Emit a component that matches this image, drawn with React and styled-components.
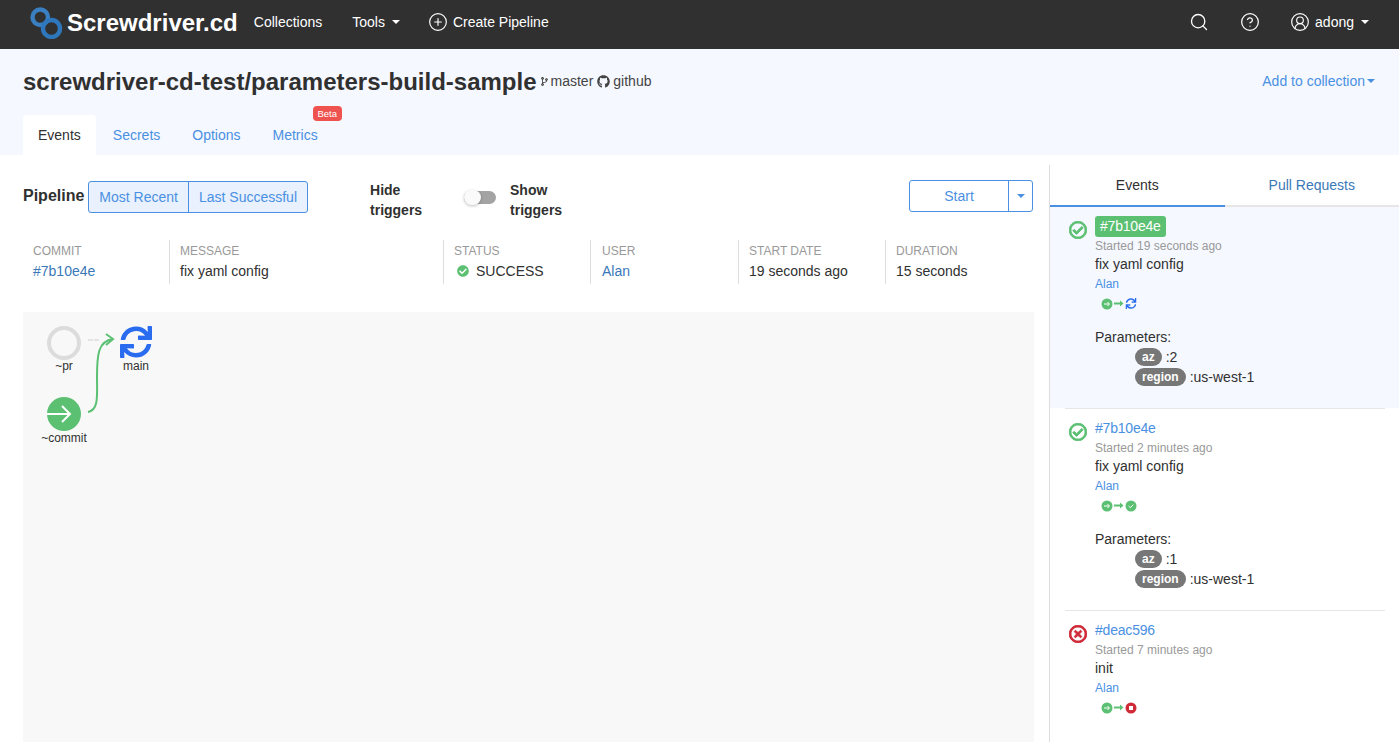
import React from 'react';
import styled, { createGlobalStyle } from 'styled-components';
import { FaCodeBranch, FaGithub, FaSync, FaRegCheckCircle, FaRegTimesCircle, FaCheckCircle } from 'react-icons/fa';
import { Search, CircleHelp, CircleUserRound, CirclePlus } from 'lucide-react';

const GREEN = '#5cc073';
const BLUE = '#4a90e2';

const GlobalStyle = createGlobalStyle`
    html, body {
        margin: 0;
        height: 742px;
        overflow: hidden;
        background: #fff;
        font-family: "Liberation Sans", Arial, sans-serif;
        font-size: 14px;
        color: #303030;
    }
`;

// top navigation bar
const Nav = styled.nav`
    height: 49px;
    background: #303030;
    color: #fff;
    display: flex;
    align-items: center;
    padding: 0 30px 6px 30px;
    box-sizing: border-box;
`;
const Brand = styled.div`
    display: flex;
    align-items: center;
    gap: 4px;
    font-size: 24px;
    font-weight: 700;
    margin: 2px 16px 0 0;
`;
const NavItem = styled.div`
    display: flex;
    align-items: center;
    gap: ${p => p.$inner ?? 5}px;
    margin-right: ${p => p.$gap || 0}px;
    white-space: nowrap;
`;
const Spacer = styled.div`
    flex: 1;
`;
const Caret = styled.span`
    display: inline-block;
    width: 0;
    height: 0;
    margin-left: ${p => p.$left ?? 2}px;
    border-left: 4px solid transparent;
    border-right: 4px solid transparent;
    border-top: 4px solid ${p => p.$color || '#fff'};
`;

// header with the pipeline name and tabs
const Header = styled.header`
    height: 106px;
    background: #f5f8ff;
    padding: 0 23px;
    box-sizing: border-box;
    display: flex;
    flex-direction: column;
`;
const TitleRow = styled.div`
    display: flex;
    align-items: center;
    height: 66px;
`;
const Title = styled.h1`
    margin: 0 3px 0 0;
    font-size: 24px;
    font-weight: 700;
    color: #303030;
    white-space: nowrap;
`;
const Source = styled.span`
    display: flex;
    align-items: center;
    gap: ${p => p.$inner}px;
    margin: -2px 4px 0 0;
    color: #444;
`;
const AddLink = styled.a`
    margin: -2px 1px 0 auto;
    color: ${BLUE};
    display: flex;
    align-items: center;
`;
const Tabs = styled.div`
    display: flex;
`;
const Tab = styled.div`
    position: relative;
    height: 40px;
    line-height: 40px;
    padding: 0 ${p => (p.$active ? 15 : 16)}px;
    border-radius: 4px 4px 0 0;
    background: ${p => (p.$active ? '#fff' : 'transparent')};
    color: ${p => (p.$active ? '#303030' : BLUE)};
    margin-right: ${p => (p.$active ? 1 : 0)}px;
`;
const Beta = styled.span`
    position: absolute;
    top: -9px;
    right: -8px;
    width: 29px;
    height: 15px;
    border-radius: 4px;
    background: #ee5350;
    color: #fff;
    font-size: 9.5px;
    line-height: 15px;
    text-align: center;
`;

// two column page body
const Body = styled.div`
    display: flex;
    height: 587px;
    overflow: hidden;
`;
const Main = styled.main`
    width: 1011px;
    margin: 0 15px 0 23px;
    padding-top: 25px;
    display: flex;
    flex-direction: column;
`;
const Toolbar = styled.div`
    display: flex;
    align-items: center;
    height: 34px;
`;
const PipelineLabel = styled.b`
    font-size: 16px;
    margin: -2px 4px 0 0;
`;
const Group = styled.div`
    display: flex;
    height: 32px;
    box-sizing: border-box;
    border: 1px solid ${BLUE};
    border-radius: 3px;
    background: #e8f1fd;
    color: ${BLUE};
`;
const GroupBtn = styled.div`
    padding: 0 10px;
    line-height: 31px;
    & + & {
        border-left: 1px solid ${BLUE};
    }
`;
const TriggerLabel = styled.b`
    width: 70px;
    line-height: 20px;
    margin: 5px ${p => p.$right || 0}px 0 ${p => p.$left || 0}px;
`;
const Toggle = styled.div`
    position: relative;
    width: 32px;
    height: 13px;
    margin: 1px 14px 0 0;
    border-radius: 7px;
    background: #a3a3a3;
`;
const Knob = styled.span`
    position: absolute;
    left: 0;
    top: -1px;
    width: 17px;
    height: 15px;
    border-radius: 8px;
    background: #fafafa;
    box-shadow: 0 1px 3px rgba(0, 0, 0, 0.25);
`;
const StartGroup = styled(Group)`
    margin: -2px 1px 0 auto;
    background: #fff;
`;
const StartBtn = styled.div`
    width: 98px;
    text-align: center;
    line-height: 30px;
`;
const StartCaret = styled.div`
    width: 23px;
    border-left: 1px solid ${BLUE};
    display: flex;
    align-items: center;
    justify-content: center;
`;

const Meta = styled.div`
    display: grid;
    grid-template-columns: 146px 274px 147px 148px 147px 147px;
    height: 44px;
    margin: 26px 0 28px;
`;
const MetaCell = styled.div`
    padding: 1px 0 0 ${p => p.$pad || 10}px;
    border-left: ${p => (p.$first ? '0' : '1px solid #ddd')};
    line-height: 20px;
`;
const MetaLabel = styled.div`
    font-size: 12px;
    color: #999;
    line-height: 20px;
`;
const MetaValue = styled.div`
    display: flex;
    align-items: center;
    gap: 7px;
    height: 19px;
    color: ${p => p.$color || '#303030'};
`;
const GraphArea = styled.div`
    flex: 1;
    background: #f8f8f8;
`;

// side panel with the events list
const Side = styled.aside`
    flex: 1;
    margin-top: 10px;
    border-left: 1px solid #ddd;
`;
const SideTabs = styled.div`
    display: flex;
    height: 42px;
`;
const SideTab = styled.div`
    flex: 1;
    text-align: center;
    line-height: 40px;
    box-sizing: border-box;
    border-bottom: 2px solid ${p => (p.$active ? BLUE : '#e6e6e6')};
    color: ${p => (p.$active ? '#303030' : '#3b78b8')};
`;
const EventItem = styled.div`
    background: ${p => (p.$highlight ? '#f5f8ff' : '#fff')};
    height: 201px;
    box-sizing: border-box;
    padding: 9px 0 0 19px;
    display: flex;
    gap: 8px;
`;
const Divider = styled.div`
    height: 1px;
    margin: 0 14px 0 15px;
    background: #e6e6e6;
`;
const StatusIcon = styled.div`
    color: ${p => p.$color};
    font-size: 18px;
    line-height: 0;
    padding-top: 5px;
    svg {
        stroke: currentColor;
        stroke-width: 28;
    }
`;
const EventInfo = styled.div`
    display: flex;
    flex-direction: column;
    align-items: flex-start;
`;
const Sha = styled.div`
    height: ${p => (p.$badge ? 21 : 20)}px;
    line-height: ${p => (p.$badge ? 21 : 20)}px;
    padding: 0 ${p => (p.$badge ? 5 : 0)}px;
    border-radius: 3px;
    letter-spacing: -0.2px;
    background: ${p => (p.$badge ? GREEN : 'transparent')};
    color: ${p => (p.$badge ? '#fff' : BLUE)};
`;
const Started = styled.div`
    font-size: 12px;
    color: #999;
    line-height: 18px;
    margin-top: ${p => (p.$badge ? 0 : 1)}px;
`;
const Message = styled.div`
    line-height: 20px;
    margin-top: -1px;
`;
const Author = styled.div`
    font-size: 12px;
    color: ${BLUE};
    line-height: 18px;
    margin-top: 1px;
`;
const MiniWrap = styled.div`
    margin: 3px 0 0 5px;
    height: 16px;
    line-height: 0;
`;
const Params = styled.div`
    margin-top: 15px;
    line-height: 20px;
`;
const ParamRow = styled.div`
    display: flex;
    align-items: center;
    gap: 4px;
    height: 20px;
    margin-left: 40px;
`;
const Pill = styled.span`
    height: 18px;
    line-height: 18px;
    padding: 0 7px;
    border-radius: 9px;
    background: #777;
    color: #fff;
    font-size: 12px;
    font-weight: 700;
`;

// blue interlinked rings of the logo
const Logo = () => (
    <svg width="33" height="32" viewBox="0 0 33 32">
        <rect x="2.5" y="2.5" width="15.5" height="15.5" rx="7.7" fill="none" stroke="#3a7fc1" strokeWidth="4.4" />
        <rect x="13" y="13" width="17" height="17" rx="8.5" fill="none" stroke="#2f77bd" strokeWidth="4.4" />
    </svg>
);

// green start node, arrow and last job status
const MiniGraph = ({ end }) => (
    <svg width="38" height="16" viewBox="0 0 38 16">
        <circle cx="7" cy="8" r="5.5" fill={GREEN} />
        <path d="M4 8h5M7.5 6l2 2-2 2" fill="none" stroke="#fff" strokeWidth="1" />
        <path d="M14 7.5h7" stroke={GREEN} strokeWidth="2" />
        <path d="M20 4.5l3.5 3-3.5 3z" fill={GREEN} />
        {end === 'running' && <FaSync x="25.5" y="2" size={11} color="#2a6cf0" />}
        {end === 'success' && (
            <>
                <circle cx="31" cy="8" r="5.5" fill={GREEN} />
                <path d="M28.6 8l1.7 1.7 3-3" fill="none" stroke="#fff" strokeWidth="1" />
            </>
        )}
        {end === 'failure' && (
            <>
                <circle cx="31" cy="8" r="5.5" fill="#cf2a38" />
                <rect x="29" y="6" width="4" height="4" fill="#fff" />
            </>
        )}
    </svg>
);

// workflow graph, page coordinates shifted by the area's offset
const Workflow = () => (
    <svg width="200" height="150" viewBox="23 312 200 150" fontFamily="Liberation Sans, Arial, sans-serif" fontSize="12" fill="#303030">
        <circle cx="64" cy="343" r="15" fill="none" stroke="#dcdcdc" strokeWidth="4" />
        <text x="64" y="370" textAnchor="middle">~pr</text>
        <path d="M88 340h11" stroke="#dcdcdc" strokeWidth="1.6" strokeDasharray="5 1" />
        <path d="M88 412C99 410 97 395 97 377C97 355 98 341 113 339" fill="none" stroke={GREEN} strokeWidth="2" />
        <path d="M106 334l7 5-7 6" fill="none" stroke={GREEN} strokeWidth="2" />
        <circle cx="64" cy="414" r="17" fill={GREEN} />
        <path d="M47 414h22M62 406l8 8-8 8" fill="none" stroke="#fff" strokeWidth="2" />
        <text x="64" y="442" textAnchor="middle">~commit</text>
        <FaSync x="120" y="326" size={32} color="#2a6cf0" />
        <text x="136" y="370" textAnchor="middle">main</text>
    </svg>
);

const metaCols = [
    { label: 'COMMIT', value: '#7b10e4e', color: '#3b78b8' },
    { label: 'MESSAGE', value: 'fix yaml config' },
    { label: 'STATUS', value: 'SUCCESS', status: true },
    { label: 'USER', value: 'Alan', color: '#3b78b8', pad: 11 },
    { label: 'START DATE', value: '19 seconds ago' },
    { label: 'DURATION', value: '15 seconds' },
];

const events = [
    { sha: '#7b10e4e', started: 'Started 19 seconds ago', message: 'fix yaml config', state: 'success', end: 'running', az: '2', active: true },
    { sha: '#7b10e4e', started: 'Started 2 minutes ago', message: 'fix yaml config', state: 'success', end: 'success', az: '1' },
    { sha: '#deac596', started: 'Started 7 minutes ago', message: 'init', state: 'failure', end: 'failure' },
];

function Event({ sha, started, message, state, end, az, active }) {
    const failed = state === 'failure';
    return (
        <EventItem $highlight={active}>
            <StatusIcon $color={failed ? '#cf2a38' : GREEN}>
                {failed ? <FaRegTimesCircle /> : <FaRegCheckCircle />}
            </StatusIcon>
            <EventInfo>
                <Sha $badge={active}>{sha}</Sha>
                <Started $badge={active}>{started}</Started>
                <Message>{message}</Message>
                <Author>Alan</Author>
                <MiniWrap><MiniGraph end={end} /></MiniWrap>
                {az && (
                    <Params>
                        Parameters:
                        <ParamRow><Pill>az</Pill>:{az}</ParamRow>
                        <ParamRow><Pill>region</Pill>:us-west-1</ParamRow>
                    </Params>
                )}
            </EventInfo>
        </EventItem>
    );
}

export default function App() {
    return (
        <>
            <GlobalStyle />
            <Nav>
                <Brand><Logo />Screwdriver.cd</Brand>
                <NavItem $gap={30}>Collections</NavItem>
                <NavItem $gap={28}>Tools<Caret /></NavItem>
                <NavItem><CirclePlus size={20} strokeWidth={1.4} />Create Pipeline</NavItem>
                <Spacer />
                <NavItem $gap={31}><Search size={20} strokeWidth={1.6} /></NavItem>
                <NavItem $gap={30}><CircleHelp size={20} strokeWidth={1.5} /></NavItem>
                <NavItem><CircleUserRound size={20} strokeWidth={1.4} />adong<Caret /></NavItem>
            </Nav>
            <Header>
                <TitleRow>
                    <Title>screwdriver-cd-test/parameters-build-sample</Title>
                    <Source $inner={2}><FaCodeBranch size={9} />master</Source>
                    <Source $inner={3}><FaGithub size={13} />github</Source>
                    <AddLink>Add to collection<Caret $color={BLUE} /></AddLink>
                </TitleRow>
                <Tabs>
                    <Tab $active>Events</Tab>
                    <Tab>Secrets</Tab>
                    <Tab>Options</Tab>
                    <Tab>Metrics<Beta>Beta</Beta></Tab>
                </Tabs>
            </Header>
            <Body>
                <Main>
                    <Toolbar>
                        <PipelineLabel>Pipeline</PipelineLabel>
                        <Group>
                            <GroupBtn>Most Recent</GroupBtn>
                            <GroupBtn>Last Successful</GroupBtn>
                        </Group>
                        <TriggerLabel $left={62} $right={24}>Hide triggers</TriggerLabel>
                        <Toggle><Knob /></Toggle>
                        <TriggerLabel>Show triggers</TriggerLabel>
                        <StartGroup>
                            <StartBtn>Start</StartBtn>
                            <StartCaret><Caret $left={0} $color={BLUE} /></StartCaret>
                        </StartGroup>
                    </Toolbar>
                    <Meta>
                        {metaCols.map((c, i) => (
                            <MetaCell key={c.label} $first={i === 0} $pad={c.pad}>
                                <MetaLabel>{c.label}</MetaLabel>
                                <MetaValue $color={c.color}>
                                    {c.status && <FaCheckCircle size={12} color={GREEN} style={{ marginLeft: 3 }} />}
                                    {c.value}
                                </MetaValue>
                            </MetaCell>
                        ))}
                    </Meta>
                    <GraphArea><Workflow /></GraphArea>
                </Main>
                <Side>
                    <SideTabs>
                        <SideTab $active>Events</SideTab>
                        <SideTab>Pull Requests</SideTab>
                    </SideTabs>
                    {events.map((e, i) => (
                        <React.Fragment key={i}>
                            {i > 0 && <Divider />}
                            <Event {...e} />
                        </React.Fragment>
                    ))}
                </Side>
            </Body>
        </>
    );
}
